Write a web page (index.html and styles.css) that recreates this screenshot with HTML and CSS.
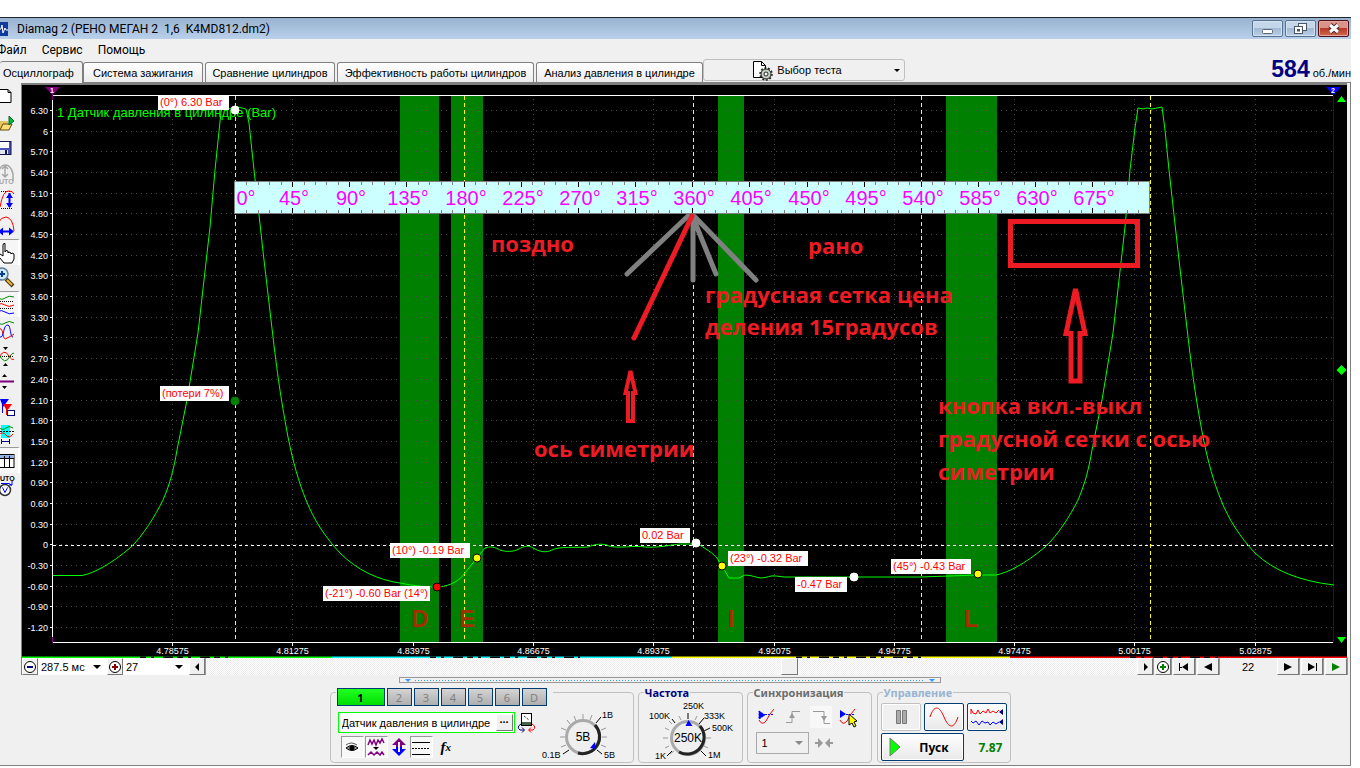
FILE: index.html
```html
<!DOCTYPE html>
<html lang="ru">
<head>
<meta charset="utf-8">
<title>Diamag 2</title>
<link rel="stylesheet" href="styles.css">
</head>
<body>
<div class="window">
  <header class="titlebar">
    <svg class="app-icon" width="8" height="14" viewBox="0 0 8 14"><rect width="8" height="14" fill="#123a9c"/><path d="M0 7h1l1-4 1 8 2-5 1 2h2" fill="none" stroke="#fff"/></svg>
    <h1 class="title">Diamag 2 (РЕНО МЕГАН 2&nbsp; 1,6&nbsp; K4MD812.dm2)</h1>
    <div class="win-buttons">
      <button class="win-btn" aria-label="Свернуть"><svg width="29" height="15" viewBox="0 0 29 15"><rect x="9.500" y="8.500" width="10" height="4" rx="1" fill="#fff" stroke="#5d6572"/></svg></button>
      <button class="win-btn" aria-label="Восстановить"><svg width="29" height="15" viewBox="0 0 29 15"><g fill="#fff" stroke="#4b5564"><rect x="12.500" y="2.500" width="8" height="7"/><rect x="8.500" y="5.500" width="8" height="7"/><rect x="11.500" y="8.500" width="2" height="1.500"/></g></svg></button>
      <button class="win-btn close" aria-label="Закрыть"><svg width="29" height="15" viewBox="0 0 29 15"><path d="M11 4l8 7M19 4l-8 7" stroke="#4a2b2e" stroke-width="5"/><path d="M11 4l8 7M19 4l-8 7" stroke="#fff" stroke-width="3"/></svg></button>
    </div>
  </header>
  <nav class="menu"><a href="#">Файл</a><a href="#">Сервис</a><a href="#">Помощь</a></nav>
  <div class="tabs">
    <button class="tab active">Осциллограф</button>
    <button class="tab ignition">Система зажигания</button>
    <button class="tab compare">Сравнение цилиндров</button>
    <button class="tab efficiency">Эффективность работы цилиндров</button>
    <button class="tab pressure">Анализ давления в цилиндре</button>
    <button class="test">
      <svg width="22" height="22" viewBox="0 0 22 22"><path d="M1.500 2.500h8l4 4v12h-12z" fill="#fff" stroke="#000"/><path d="M9.500 2.500v4h4" fill="none" stroke="#000"/><circle cx="14" cy="15" r="5" fill="#c4d2c4" stroke="#222" stroke-width="1"/><circle cx="14" cy="15" r="6" fill="none" stroke="#222" stroke-width="1.500" stroke-dasharray="2 1.700"/><circle cx="14" cy="15" r="2" fill="#fff" stroke="#222"/></svg>
      <span>Выбор теста</span>
      <i class="caret"></i>
    </button>
    <div class="rpm"><b>584</b><span>об./мин</span></div>
  </div>

  <main class="main">
    <aside class="tools">
      <button aria-label="Новый"><svg viewBox="0 0 20 26"><path d="M-1 6.500h9l3 3v10h-12M8 6.500v3h3" fill="#fff" stroke="#000"/></svg></button>
      <button aria-label="Открыть"><svg viewBox="0 0 20 26"><path d="M0 12h8v9H0z" fill="#e3c560"/><path d="M0 21l3-6h9l-3 6z" fill="#ffdf7a" stroke="#60480c"/><path d="M9 7l5 5-5 4z" fill="#0b3" stroke="#063"/></svg></button>
      <button aria-label="Сохранить"><svg viewBox="0 0 20 26"><rect x="-2" y="6.500" width="13" height="13" fill="#4b55b8" stroke="#10184e"/><rect x="0" y="7" width="9" height="6" fill="#fff"/><rect x="0" y="15" width="8" height="4" fill="#dfe3f2"/><rect x="5" y="15" width="2" height="4" fill="#10184e"/></svg></button>
      <button aria-label="Авто"><svg viewBox="0 0 20 26"><path d="M-2 13q2-9 7-9 6 0 8 9v7M5 6v10M2 8l3-3 3 3M2 13l3 3 3-3" fill="none" stroke="#a6a6a6" stroke-width="1.500"/><text x="-1" y="23" class="tiny muted">UTO</text></svg></button>
      <button aria-label="Высота"><svg viewBox="0 0 20 26"><path d="M-1 4.500h13M-1 21.500h13" stroke="#000" stroke-dasharray="1 1"/><path d="M0 20Q3 3 9 4q4 0 5 3" fill="none" stroke="red"/><path d="M9.500 6v14" stroke="#00f" stroke-width="2"/><path d="M6 11l3.500-5 3.500 5zM6 16l3.500 5 3.500-5z" fill="#00f"/></svg></button>
      <button aria-label="Ширина"><svg viewBox="0 0 20 26"><path d="M-2 10Q1 4 6 4q7 1 8 14" fill="none" stroke="red"/><path d="M0 18.500h11" stroke="#00f" stroke-width="2"/><path d="M9 14.500l5 4-5 4zM3 14.500l-5 4 5 4z" fill="#00f"/></svg></button>
      <button class="pressed" aria-label="Рука"><svg viewBox="0 0 20 26"><path d="M0 14l3 2V5q0-2 2-1.500V12l1-1.500 2 .5v2l1-1 2 1v1l1-1 2 1v5l-2 4H4l-4-5" fill="#fff" stroke="#000"/></svg></button>
      <button aria-label="Масштаб"><svg viewBox="0 0 20 26"><path d="M6 14l7 7" stroke="#4a3a10" stroke-width="4"/><path d="M7 15l5 5" stroke="#f2b632" stroke-width="2"/><circle cx="2" cy="9" r="6" fill="#cfe9fb" stroke="#5f7c97" stroke-width="1.500"/><path d="M-1 9h6M2 6v6" stroke="#05408c" stroke-width="2"/></svg></button>
      <button class="pressed" aria-label="Раздельно"><svg viewBox="0 0 20 26"><g fill="none"><path d="M-2 5q3 4 7 1t9-1" stroke="#080"/><path d="M-2 13q3-3 7 0t9 0" stroke="red"/><path d="M-2 20q3-3 7 0t9 1" stroke="#00f"/><path d="M0 9.500h14M0 16.500h14" stroke="#000" stroke-dasharray="1 1"/></g></svg></button>
      <button aria-label="Наложить"><svg viewBox="0 0 20 26"><g fill="none"><path d="M-2 5q3 4 7 1t9 0" stroke="#080"/><path d="M-2 12q4-2 5 5t4 4q3-1 7-4" stroke="red"/><path d="M0 20c4 2 3-13 8-12 3 1 2 13 5 12" stroke="#00f"/></g></svg></button>
      <button aria-label="Ноль"><svg viewBox="0 0 20 26"><path d="M0 13.500h14" stroke="#000" stroke-dasharray="1 1"/><path d="M-2 16Q4 4 9 13q3 5 5 3" fill="none" stroke="red"/><path d="M-2 10q7 14 12 3 2-3 4-3" fill="none" stroke="#080"/><path d="M3 4h5L5.500 7zM3 23h5L5.500 20z"/></svg></button>
      <button aria-label="Сжать"><svg viewBox="0 0 20 26"><path d="M0 12.500h14" stroke="#800080" stroke-width="2"/><path d="M2 8h5L4.500 5zM2 17h5l-2.500 3z"/></svg></button>
      <button aria-label="Маркеры"><svg viewBox="0 0 20 26"><path d="M0 4h9l-6 8z" fill="#00f"/><path d="M3 9h9l-5 7z" fill="red"/><path d="M2.500 4v14" stroke="#00f"/><path d="M6.500 12v8" stroke="red"/><rect x="7.500" y="15.500" width="7" height="5" fill="#fff" stroke="#000080"/></svg></button>
      <button aria-label="Область"><svg viewBox="0 0 20 26"><rect x="1" y="4" width="9" height="13" fill="#0ff"/><path d="M-2 6q5 4 8 1t7 0" fill="none" stroke="#080"/><path d="M-2 14q5-4 8 0t7-1" fill="none" stroke="red"/><path d="M0 10.500h14" stroke="#000" stroke-dasharray="2 1"/><path d="M1.500 18v5M9.500 18v5M1 20.500h9" stroke="#000080"/></svg></button>
      <button class="pressed" aria-label="Таблица"><svg viewBox="0 0 20 26"><rect x="-2" y="6.500" width="16" height="13" fill="#fff" stroke="#000"/><path d="M-1 7h15v3H-1z" fill="#91b4e4"/><path d="M0 10.500h14M4.500 8v12M9.500 8v12" stroke="#000"/></svg></button>
      <button aria-label="Авто вольтметр"><svg viewBox="0 0 20 26"><text x="0" y="8" class="tiny">UTO</text><circle cx="5" cy="17" r="5.500" fill="#fff" stroke="#333" stroke-width="1.500"/><path d="M2.500 14.500l2.500 5 2.500-5" fill="none" stroke="#00f"/><path d="M1 10.500h8l3 2M12 8v4H9" stroke="#00f" fill="none"/></svg></button>
    </aside>

    <section class="scope">
      <svg class="plot" viewBox="22 85 1325 573" role="img" aria-label="Датчик давления в цилиндре">
        <rect x="22" y="85" width="1325" height="573"/>
        <g fill="#008000"><rect x="400" y="96" width="39" height="546"/><rect x="451" y="96" width="32" height="546"/><rect x="718" y="96" width="26" height="546"/><rect x="946" y="96" width="51" height="546"/></g>
        <g id="grid" class="grid"></g>
        <g id="axis" class="axis"></g>
        <text x="57" y="117" class="series">1 Датчик давления в цилиндре (Bar)</text>
        <path class="zero" d="M53 545.500H1333"/>
        <path class="phase" d="M235.500 96V642M464.500 96V642M693.500 96V642M921.500 96V642M1150.500 96V642"/>
        <path d="M52.500 95.500H1333M52.500 95.500V642.500H1333" fill="none" stroke="#fff"/>
        <path d="M1333.500 95V643" stroke="#00f"/>
        <path d="M52.500 88v12M52.500 637v6" stroke="#800080"/>
        <path d="M45 87h15l-7.500 8z" fill="#800080"/><path d="M1326 87h15l-7.500 8z" fill="#00f"/>
        <text x="52" y="93" class="flag">1</text><text x="1333" y="93" class="flag">2</text>
        <path d="M1337 102h9l-4.500-6zM1337 637h9l-4.500 6zM1341.500 365l5 5-5 5-5-5z" fill="#0f0"/>
        <path class="curve" d="M53 575.500H82C95 573 112 563 130 548 143 536 155 516 163 500 170 484 174 468 177 450L187 400 198 333 210 227 215 170 221 112 223 107 228 109 238 107 246 109 249 123 254 170 259 215 264 260 273 337C278 380 282 405 288 437 293 462 299 483 306 500 314 520 325 537 340 553 357 570 378 580 400 583 415 586 425 587 437 587 445 587 458 583 464 574L477 558 485 548C490 546 495 547 500 550 506 552 513 552 519 549 524 546 529 545 533 548 540 552 546 553 552 550 560 546 575 548 588 547 595 544 603 543 609 546 620 549 633 545 645 547 658 548 670 545 680 544H692L696 543C705 548 714 554 717 558L722 566 729 578H739L745 575C752 575 757 578 761 578 767 578 770 575 776 576L784 577H854L920 577 978 575H996C1007 573 1025 564 1045 547 1058 535 1070 516 1078 500 1085 484 1089 468 1092 450L1102 400 1113 333 1125 227 1130 170 1135 128 1138 108 1143 109 1147 108 1152 109 1157 108 1162 107 1165 130 1169 170 1174 215 1179 260 1188 337C1193 380 1197 405 1203 437 1208 462 1214 483 1221 500 1229 520 1240 537 1255 553 1274 571 1300 581 1334 585"/>
        <g class="phase-letter"><text x="420" y="627">D</text><text x="467" y="627">E</text><text x="731" y="627">I</text><text x="971" y="627">L</text></g>
        <g id="ruler" class="ruler"></g>
        <g stroke="#000"><circle cx="235" cy="110" r="4" fill="#fff" stroke="#fff"/><circle cx="235" cy="401" r="4" fill="#008000" stroke="#008000"/><circle cx="477" cy="558" r="4" fill="#ff0"/><circle cx="437" cy="587" r="4" fill="red"/><circle cx="696" cy="543" r="4" fill="#fff" stroke="#fff"/><circle cx="722" cy="566" r="4" fill="#ff0"/><circle cx="854" cy="577" r="4" fill="#fff" stroke="#fff"/><circle cx="978" cy="574" r="4" fill="#ff0"/></g>
        <g id="marks" class="marks"></g>
        <g fill="none" stroke="#808080" stroke-width="5" stroke-linecap="round"><path d="M688 216L627 274M693 216V280M694 220L716 274M695 217L756 280"/><path d="M692 216L634 338" stroke="#ed1c24"/></g>
        <g class="note-shape"><rect x="1010.500" y="221.500" width="127" height="44"/><path d="M1075.500 289L1066 333.500H1071V381H1080V333.500H1085z"/><path class="thin" d="M630.500 371L625.500 393H628V421H633V393H635.500z"/></g>
        <g class="note">
          <text x="491" y="252">поздно</text><text x="808" y="254">рано</text>
          <text x="705" y="303">градусная сетка цена</text><text x="705" y="335">деления 15градусов</text>
          <text x="534" y="457">ось симетрии</text>
          <text x="938" y="414">кнопка вкл.-выкл</text><text x="938" y="447">градусной сетки с осью</text><text x="938" y="480">симетрии</text>
        </g>
        <g stroke-width="2"><path d="M22 657.500H332" stroke="#0f0"/><path d="M332 657.500H672" stroke="#0ff"/><path d="M672 657.500H1010" stroke="#ff0"/><path d="M1010 657.500H1347" stroke="red"/><path d="M140 657.500H228M430 657.500H580M796 657.500H930M1130 657.500H1228" stroke="#000" stroke-dasharray="6 5 3 9 10 4"/></g>
      </svg>

      <div class="navbar">
        <button class="nb w16" aria-label="Уменьшить"><svg width="14" height="14" viewBox="0 0 14 14"><circle cx="7" cy="7" r="5.500" fill="#fff" stroke="#000"/><path d="M4 7h6" stroke="#000080" stroke-width="2"/></svg></button>
        <label class="pick w69"><select aria-label="Длительность"><option>287.5 мс</option></select><i class="caret"></i></label>
        <button class="nb w16" aria-label="Увеличить"><svg width="14" height="14" viewBox="0 0 14 14"><circle cx="7" cy="7" r="5.500" fill="#fff" stroke="#000"/><path d="M4 7h6M7 4v6" stroke="#800000" stroke-width="2"/></svg></button>
        <label class="pick w66"><select aria-label="Кадр"><option>27</option></select><i class="caret"></i></label>
        <button class="nb w16" aria-label="Влево"><svg width="12" height="10" viewBox="0 0 12 10"><path d="M8 1v8L4 5z"/></svg></button>
        <input class="track" type="range" min="0" max="1000" value="629" aria-label="Прокрутка">
        <button class="nb w16" aria-label="Вправо"><svg width="12" height="10" viewBox="0 0 12 10"><path d="M5 1v8l4-4z"/></svg></button>
        <button class="nb w16 gap" aria-label="Добавить"><svg width="14" height="14" viewBox="0 0 14 14"><circle cx="7" cy="7" r="5.500" fill="#fff" stroke="#000"/><path d="M4 7h6M7 4v6" stroke="#008000" stroke-width="2"/></svg></button>
        <button class="nb w22 gap" aria-label="В начало"><svg width="12" height="10" viewBox="0 0 12 10"><path d="M1 1h1v8H1zM2 5h2v1H2zM10 1v8L4 5z"/></svg></button>
        <button class="nb w22 gap" aria-label="Назад"><svg width="12" height="10" viewBox="0 0 12 10"><path d="M10 1v8L2 5z"/></svg></button>
        <output class="frame">22</output>
        <button class="nb w22" aria-label="Вперёд"><svg width="12" height="10" viewBox="0 0 12 10"><path d="M2 1v8l8-4z"/></svg></button>
        <button class="nb w22 gap" aria-label="В конец"><svg width="12" height="10" viewBox="0 0 12 10"><path d="M10 1h1v8h-1zM2 1v8l7-4z"/></svg></button>
        <button class="nb w22 gap" aria-label="Играть"><svg width="12" height="10" viewBox="0 0 12 10"><path d="M2 1v8l8-4z" fill="#008000"/></svg></button>
      </div>
    </section>
  </main>

  <footer class="bottom">
    <div class="splitter"><i></i><span></span><i></i></div>
    <div class="groups">
      <fieldset class="group channel">
        <legend class="channels"><button class="on">1</button><button>2</button><button>3</button><button>4</button><button>5</button><button>6</button><button>D</button></legend>
        <div class="channel-body">
          <div class="row"><div class="sensor"><input type="text" value="Датчик давления в цилиндре" aria-label="Датчик"><button aria-label="Выбрать датчик">...</button></div>
            <button class="flat" aria-label="Переключить"><svg width="20" height="21" viewBox="0 0 20 21"><rect x="4.500" y="1.500" width="10" height="12" fill="#fff" stroke="#000"/><path d="M5 10h9v3H5z" fill="#476447"/><path d="M7 4l5 4" stroke="#000" stroke-dasharray="1 1"/><path d="M4 12q-5 3-1 6h4M5 15.500l2.500 2.500L5 20.500" fill="none" stroke="#000080"/><path d="M15 12q5 3 1 6h-4M14 15.500L11.500 18l2.500 2.500" fill="none" stroke="red"/></svg></button></div>
          <div class="row views">
            <button class="sunk" aria-label="Показать"><svg width="22" height="22" viewBox="0 0 22 22"><path d="M5 12q6-5 12 0-6 5-12 0z" fill="#999" stroke="#000"/><path d="M5 9q5-4 11 0" stroke="#555" fill="none"/><circle cx="11" cy="12" r="2.500"/></svg></button>
            <button class="sunk" aria-label="Фильтр"><svg width="22" height="22" viewBox="0 0 22 22"><path d="M3 9l2-5 2 4 2-4 2 5 2-5 2 3 2-4 2 4M3 19l3-3 3 3 3-3 3 3 2-3 2 3" fill="none" stroke="#800080" stroke-width="1.500"/><path d="M8 11h6l-3 3z"/></svg></button>
            <button class="flat" aria-label="Смещение"><svg width="20" height="22" viewBox="0 0 20 22"><path d="M10 2l7 7h-4v3H7V9H3z" fill="#800080"/><path d="M10 20l7-7h-4v-2H7v2H3z" fill="#00f"/><path d="M10 6v10" stroke="#f0f0f0" stroke-width="2"/></svg></button>
            <button class="sunk" aria-label="Линии"><svg width="22" height="22" viewBox="0 0 22 22"><path d="M2 6.500h18M2 18.500h18" stroke="#000"/><path d="M2 12.500h18" stroke="#000" stroke-dasharray="2 1"/></svg></button>
            <button class="flat fx">f<sub>x</sub></button>
          </div>
        </div>
        <svg class="knob" width="88" height="60" viewBox="542 704 88 60"><g stroke="#999"><path d="M565 738h-5M566 731l-5-2M566 746l-5 2M570 725l-3-4M576 722l-2-5M583 720v-5M590 721l2-5M602 738h5M601 731l5-2M601 746l5 2"/></g><path d="M596 724l5-6M569 751l-6 4M597 751l5 4" stroke="#000"/><circle cx="583" cy="738" r="16.500" fill="#efefef" stroke="#aaa" stroke-width="3"/><path d="M595 726A17 17 0 0 1 578 754" fill="none" stroke="#222" stroke-width="3"/><path d="M590 749l5-6 1 7z" fill="#00f"/><text x="583" y="742" class="knob-value">5В</text><text x="602" y="719">1В</text><text x="542" y="759">0.1В</text><text x="604" y="759">5В</text></svg>
      </fieldset>
      <fieldset class="group freq">
        <legend>Частота</legend>
        <svg class="knob" width="94" height="64" viewBox="643 699 94 64"><g stroke="#999"><path d="M671 724l-3-3M668 730l-4-2M667 738h-5M668 746l-4 2M680 720l-2-4M694 720l2-4M705 738h5M703 746l4 2M673 751l-4 3"/></g><path d="M674 723l-3-4M687 719v-6M698 724l5-6M703 731l6-3M671 751l-5 5M699 750l6 6" stroke="#000"/><circle cx="687" cy="738" r="16.500" fill="#efefef" stroke="#aaa" stroke-width="3"/><path d="M699 726A17 17 0 0 1 678 752" fill="none" stroke="#222" stroke-width="3"/><path d="M687.500 720l4 6h-7z" fill="#00f"/><text x="687" y="742" class="knob-value">250K</text><text x="682" y="709">250K</text><text x="648" y="719">100K</text><text x="703" y="719">333K</text><text x="711" y="731">500K</text><text x="654" y="759">1K</text><text x="707" y="758">1M</text></svg>
      </fieldset>
      <fieldset class="group sync">
        <legend>Синхронизация</legend>
        <div class="row sync-row">
          <button class="flat" aria-label="Авто синхронизация"><svg width="22" height="22" viewBox="0 0 22 22"><path d="M3 5l6 4-6 4zM9 8.500h8" fill="#00f" stroke="#00f" stroke-dasharray="2 1"/><path d="M3 14q3 6 7 1 4-8 8-12" fill="none" stroke="red"/></svg></button>
          <button class="flat" aria-label="Фронт"><svg width="22" height="22" viewBox="0 0 22 22"><path d="M3 16.500h6v-11h8" fill="none" stroke="#999"/><path d="M6 12l3-5 3 5z" fill="#999"/></svg></button>
          <button class="flat dither" aria-label="Спад"><svg width="22" height="22" viewBox="0 0 22 22"><path d="M3 5.500h11v12h6" fill="none" stroke="#999"/><path d="M11 10l3 5 3-5z" fill="#999"/></svg></button>
          <button class="flat" aria-label="Уровень"><svg width="22" height="22" viewBox="0 0 22 22"><path d="M3 4l6 4-6 4z" fill="#00f"/><path d="M3 8.500h14" stroke="#00f" stroke-dasharray="2 1"/><path d="M3 14q3 6 7 1 4-8 8-12" fill="none" stroke="red"/><path d="M12 8v11l3-2 2 4 2-1-2-4 3-1z" fill="#ff0" stroke="#000"/></svg></button>
        </div>
        <div class="row"><label class="sync-pick"><select aria-label="Канал"><option>1</option></select><i class="caret"></i></label><svg width="20" height="12" viewBox="0 0 20 12"><path d="M1 5h3V1l5 5-5 5V7H1zM19 5h-3V1l-5 5 5 5V7h3z" fill="#999"/></svg></div>
      </fieldset>
      <fieldset class="group control">
        <legend>Управление</legend>
        <div class="control-grid">
          <button class="big disabled" aria-label="Пауза"><svg width="16" height="18" viewBox="0 0 16 18"><path d="M3.500 2.500h4v13h-4zM9.500 2.500h4v13h-4z" fill="#aaa" stroke="#777"/></svg></button>
          <button class="big" aria-label="Однократно"><svg width="30" height="22" viewBox="0 0 30 22"><path d="M1 11C5-1 10-1 15 11s10 12 14 0" fill="none" stroke="red"/></svg></button>
          <button class="big" aria-label="Непрерывно"><svg width="34" height="22" viewBox="0 0 34 22"><path d="M1 8V3l2 4 3 1 2-4 2 4 3-3 3 2 2-4 2 4 3-2 3 2 3-3" fill="none" stroke="red"/><path d="M1 15l2 2 3-2 3 4 3-4 3 2 3-1 2 3 3-3 3 2 3-2" fill="none" stroke="#00f"/><path d="M29 6l4-3v6zM29 16l4-3v6z" fill="#000080"/></svg></button>
          <button class="big start"><svg width="12" height="20" viewBox="0 0 12 20"><path d="M1 1v18l10-9z" fill="#0f0" stroke="#777"/></svg><span>Пуск</span></button>
          <output class="volt">7.87</output>
        </div>
      </fieldset>
    </div>
  </footer>
</div>
<script src="plot.js"></script>
</body>
</html>
```

FILE: styles.css
```css
* { box-sizing: border-box; }
body { margin: 0; padding: 17px 9px 0 0; background: #fff; color: #000; font: 11px "Liberation Sans", Arial, sans-serif; overflow-x: hidden; }
button, input, select { font: inherit; color: inherit; margin: 0; padding: 0; }
button { display: flex; align-items: center; justify-content: center; }
svg { display: block; flex: none; }
.window { background: #f0f0f0; border-top: 1px solid #20262e; border-bottom: 1px solid #808080; }
.titlebar { height: 21px; display: flex; align-items: center; background: linear-gradient(#98b2d0, #b8d0ea); }
.title { margin: 0 0 0 9px; flex: 1; font: 12px Roboto, sans-serif; }
.win-buttons { display: flex; gap: 2px; padding-right: 2px; }
.win-btn { width: 31px; height: 17px; border: 1px solid #58718f; border-radius: 2px; box-shadow: inset 0 0 0 1px #d4e2f1; background: linear-gradient(#c4d6ea 50%, #a1b9d4 50%, #b9cfe6); }
.win-btn.close { border-color: #4c1018; box-shadow: inset 0 0 0 1px #e3a69c; background: linear-gradient(#dc9289 50%, #b93a26 50%, #cf6a50); }
.menu { height: 21px; display: flex; align-items: center; gap: 15px; font: 12px Roboto, sans-serif; }
.menu a { color: #000; text-decoration: none; }
.menu a:first-child { margin-left: -3px; }
.tabs { height: 23px; display: flex; align-items: flex-end; gap: 2px; border-bottom: 1px solid #808080; }
.tab { height: 20px; padding: 0; border: 1px solid #808080; border-bottom: 0; border-radius: 3px 3px 0 0; background: linear-gradient(#fff, #ececec); white-space: nowrap; }
.tab.active { width: 83px; height: 22px; margin: 0 -2px -1px 0; padding-left: 3px; justify-content: flex-start; border-left: 0; background: #f0f0f0; }
.ignition { width: 120px; }
.compare { width: 130px; }
.efficiency { width: 197px; }
.pressure { width: 167px; }
.test { width: 202px; height: 22px; margin: 0 0 1px -2px; padding-right: 14px; gap: 3px; border: 1px solid #bfbfbf; border-radius: 3px; background: #f0f0f0; position: relative; }
.test .caret { position: absolute; right: 4px; }
.caret { width: 0; height: 0; border: 3px solid transparent; border-top: 3px solid #000; border-bottom: 0; }
.rpm { margin-left: auto; display: flex; align-items: baseline; gap: 3px; }
.rpm b { font-size: 23px; line-height: 26px; color: #000080; }
.rpm span { white-space: nowrap; }

.main { display: flex; border-right: 1px solid #808080; padding-right: 3px; }
.tools { width: 21px; flex: none; overflow: hidden; }
.tools button { width: 20px; height: 26px; justify-content: flex-start; border: 0; background: none; }
.tools svg { width: 20px; height: 26px; }
.tools .pressed { border-top: 1px solid #999; border-right: 2px solid #fff; background: #f6f6f6; }
.tiny { font: bold 7px "Liberation Sans", sans-serif; }
.muted { fill: #a6a6a6; }
.scope { flex: 1; min-width: 0; border: solid #808080; border-width: 2px 0 0 1px; }
.plot { width: 100%; height: auto; font-family: "Liberation Sans", Arial, sans-serif; }
.grid { stroke: #4b4b4b; stroke-dasharray: 1 4; }
.axis { fill: #fff; stroke: none; font-size: 9px; }
.axis path { stroke: #fff; }
.axis .y { text-anchor: end; }
.axis .x { text-anchor: middle; }
.series { fill: #0f0; font-size: 13px; }
.zero { stroke: #fff; stroke-dasharray: 3 3; }
.phase { stroke: #ff0; stroke-dasharray: 4 3; }
.flag { fill: #fff; font: bold 7px "Liberation Sans", sans-serif; text-anchor: middle; }
.curve { fill: none; stroke: #0f0; }
.phase-letter { fill: #a03000; font-size: 24px; font-weight: bold; text-anchor: middle; }
.ruler rect { fill: #cff; stroke: #808080; }
.ruler text { fill: #f0f; font-size: 20px; text-anchor: middle; }
.marks rect { fill: #fff; }
.marks text { fill: red; font-size: 11px; }
.note { fill: #ed1c24; font: bold 22px "Open Sans", "Noto Sans", sans-serif; }
.note-shape { fill: none; stroke: #ed1c24; stroke-width: 5; }
.note-shape .thin { stroke-width: 4; }

.navbar { height: 17px; display: flex; align-items: stretch; background: #f0f0f0; }
.nb { flex: none; border: 1px solid; border-color: #fff #777 #777 #fff; box-shadow: 1px 0 0 #999; background: #f0f0f0; }
.w16 { width: 16px; }
.w22 { width: 22px; }
.w66 { width: 66px; }
.w69 { width: 69px; }
.gap { margin-left: 2px; }
.pick { flex: none; display: flex; align-items: center; padding: 0 6px 0 3px; background: #fff; }
.pick select, .sync-pick select { flex: 1; min-width: 0; border: 0; background: none; appearance: none; }
.pick .caret { border-width: 4px; border-bottom-width: 0; }
.track { flex: 1; min-width: 0; height: 17px; margin-left: 1px; appearance: none; background: repeating-conic-gradient(#fff 0 25%, #ececec 0 50%) 0 0 / 2px 2px; }
.track::-webkit-slider-thumb { appearance: none; width: 17px; height: 17px; border: 1px solid; border-color: #fff #777 #777 #fff; background: #f0f0f0; }
.frame { width: 58px; flex: none; display: flex; align-items: center; justify-content: center; }

.bottom { border-right: 1px solid #808080; padding: 2px 10px 2px 0; }
.splitter { width: 542px; height: 6px; margin: 0 auto; padding: 0 5px; display: flex; align-items: center; gap: 4px; border: 1px solid #999; }
.splitter i { border: 3px solid transparent; border-top-color: #39f; border-bottom: 0; }
.splitter span { flex: 1; height: 1px; background: repeating-linear-gradient(90deg, #39f 0 1px, transparent 1px 3px); }
.groups { display: flex; justify-content: center; gap: 4px; padding-top: 3px; }
.group { height: 77px; margin: 0; padding: 0 5px; min-width: 0; border: 1px solid #c0c0c0; border-radius: 4px; }
.group legend { height: 13px; padding: 0 1px; font: bold 11px "Noto Sans", sans-serif; line-height: 13px; }
.group .row { display: flex; align-items: center; }
.channel { width: 304px; display: flex; justify-content: space-between; padding: 0 3px 0 7px; }
.group .channels { display: flex; align-items: flex-start; gap: 2px; margin-left: -2px; padding-right: 6px; }
.channels button { width: 25px; height: 18px; margin-top: 2px; border: 1px solid #003c74; background: linear-gradient(#d4d4d4, #aeaeae); color: #808080; font-size: 11px; font-weight: normal; }
.channels .on { width: 48px; background: linear-gradient(#2f2, #0d0); color: #000; font-weight: bold; }
.channel-body { padding-top: 13px; display: flex; flex-direction: column; gap: 3px; }
.sensor { width: 177px; height: 21px; display: flex; padding: 1px; border: 1px solid #0f0; background: #fff; }
.sensor input { flex: 1; min-width: 0; padding-left: 2px; border: 0; background: none; }
.sensor button { width: 17px; border: 1px solid; border-color: #fff #777 #777 #fff; background: #f0f0f0; font-weight: bold; line-height: 8px; align-items: flex-start; }
.channel .row { gap: 2px; }
.channel .views { padding-left: 3px; gap: 1px; }
.flat { border: 0; background: none; }
.sunk { width: 23px; height: 22px; border: 1px solid; border-color: #999 #fff #fff #999; background: #f8f8f8; }
.dither { background: #f8f8f8; }
.fx { padding-left: 7px; font: italic bold 15px "Liberation Serif", serif; }
.fx sub { font-size: 11px; }
.knob { font-size: 9px; margin-top: 4px; }
.knob-value { font-size: 12px; text-anchor: middle; }
.freq { width: 105px; }
.freq .knob { margin-top: 0; }
.freq legend { color: #000080; }
.sync { width: 125px; }
.sync legend { color: #6d6d6d; }
.sync-row { gap: 5px; padding: 7px 0 4px 3px; }
.sync-pick { width: 53px; height: 22px; margin: 0 5px 0 3px; padding: 0 5px; display: flex; align-items: center; border: 1px solid #aaa; }
.sync-pick .caret { border-top-color: #888; border-width: 4px; border-bottom-width: 0; }
.control { width: 134px; margin-left: 1px; padding: 0 3px; }
.control legend { margin-left: 2px; color: #99b4d1; }
.control-grid { display: grid; grid-template-columns: 40px 40px 40px; gap: 2px 3px; padding-top: 4px; }
.big { height: 28px; border: 1px solid #003c74; border-radius: 2px; box-shadow: inset 0 0 0 1px #fff; background: linear-gradient(#fff, #e8e8e8); font: bold 12px "Noto Sans", sans-serif; }
.big.disabled { border-color: #c0c0c0; background: #f0f0f0; }
.start { grid-column: span 2; gap: 18px; padding-right: 6px; }
.volt { align-self: center; padding-left: 12px; color: #008000; font: bold 12px "Noto Sans", sans-serif; }
```

FILE: plot.js
```js
const byId = id => document.getElementById(id);

const rows = Array.from({ length: 26 }, (_, i) => ({ v: 6.3 - i * 0.3, y: Math.round(110 + i * 20.68) + 0.5 }));
const cols = Array.from({ length: 10 }, (_, i) => ({ v: 4.78575 + i * 0.027, x: Math.round(172 + i * 120.3) + 0.5 }));
const format = v => (Math.abs(v) < 0.01 ? '0' : Math.abs(v - Math.round(v)) < 0.01 ? v.toFixed(0) : v.toFixed(2));

byId('grid').innerHTML =
  rows.map(r => `<path d="M56 ${r.y}H1332"/>`).join('') +
  cols.map(c => `<path d="M${c.x} 99V642"/>`).join('');

byId('axis').innerHTML =
  rows.map(r => `<text class="y" x="48" y="${r.y + 3}">${format(r.v)}</text><path d="M50 ${r.y}h3"/>`).join('') +
  cols.map(c => `<text class="x" x="${c.x}" y="654">${c.v.toFixed(5)}</text><path d="M${c.x} 643v3"/>`).join('');

let ruler = '<rect x="234.5" y="181.5" width="915" height="32"/>';
for (let i = 1; i < 80; i++) {
  const x = Math.round(235 + i * 11.43) + 0.5;
  const major = i % 5 === 0;
  const len = major ? 5 : 3;
  ruler += `<path d="M${x} 182v${len}M${x} 213v-${len}" stroke="${major ? '#000' : '#808080'}"/>`;
}
for (let d = 0; d < 720; d += 45) {
  ruler += `<text x="${d ? Math.round(237 + d * 1.27) : 246}" y="205">${d}°</text>`;
}
byId('ruler').innerHTML = ruler;

byId('marks').innerHTML = [
  [158, 95, 71, '(0°) 6.30 Bar'],
  [160, 386, 69, '(потери 7%)'],
  [390, 543, 80, '(10°) -0.19 Bar'],
  [323, 586, 107, '(-21°) -0.60 Bar (14°)'],
  [640, 528, 50, '0.02 Bar'],
  [728, 551, 80, '(23°) -0.32 Bar'],
  [795, 577, 52, '-0.47 Bar'],
  [891, 559, 80, '(45°) -0.43 Bar']
].map(([x, y, w, t]) => `<rect x="${x}" y="${y}" width="${w}" height="15"/><text x="${x + 2}" y="${y + 11}">${t}</text>`).join('');
```
